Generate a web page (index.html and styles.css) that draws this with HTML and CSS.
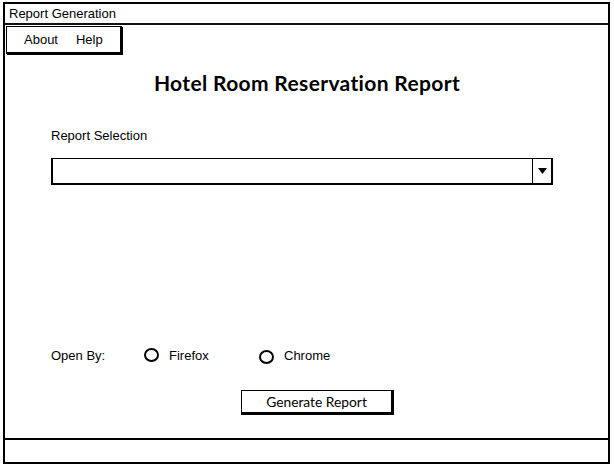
FILE: index.html
```html
<!DOCTYPE html>
<html>
<head>
<meta charset="utf-8">
<link rel="stylesheet" href="styles.css">
</head>
<body>
<div class="window">
  <div class="titlebar">Report Generation</div>
  <div class="menubar">
    <div class="menu"><span>About</span><span>Help</span></div>
  </div>
  <div class="content">
    <h1 class="heading">Hotel Room Reservation Report</h1>
    <div class="label">Report Selection</div>
    <div class="combo">
      <div class="combo-field"></div>
      <div class="combo-btn"><svg width="9" height="6" viewBox="0 0 9 6"><path d="M0 0H9L4.5 6Z" fill="#000"/></svg></div>
    </div>
    <div class="spacer"></div>
    <div class="openby">
      <span class="ob-label">Open By:</span>
      <span class="radio"><span class="circle"></span>Firefox</span>
      <span class="radio"><span class="circle low"></span>Chrome</span>
    </div>
    <div class="btnrow"><div class="button">Generate Report</div></div>
  </div>
  <div class="statusbar"></div>
</div>
</body>
</html>
```
FILE: styles.css
```css
html, body { margin: 0; padding: 0; background: #fff; }
body { width: 614px; height: 472px; font-family: "Liberation Sans", Arial, sans-serif; color: #000; }
.window {
  margin: 2px 0 0 3px;
  width: 603px;
  height: 458px;
  border: 2px solid #000;
  display: flex;
  flex-direction: column;
}
.titlebar {
  height: 19px;
  border-bottom: 2px solid #111;
  font-size: 13px;
  line-height: 19px;
  padding-left: 4px;
}
.menubar { padding: 1px 0 0 1px; }
.menu {
  width: 116px;
  height: 28px;
  border: 2px solid #000;
  border-top-width: 1px;
  border-left-width: 1px;
  box-shadow: 1px 1px 0 #000;
  display: flex;
  align-items: center;
  gap: 18px;
  padding-left: 17px;
  font-size: 13px;
  box-sizing: border-box;
}
.content { flex: 1; display: flex; flex-direction: column; padding: 0 0 0 46px; }
.heading {
  margin: 16px 0 0 0;
  font-family: "Lato", sans-serif;
  font-weight: bold;
  font-size: 21px;
  text-align: center;
  width: 512px;
  letter-spacing: 0.35px;
  line-height: 26px;
}
.label { margin-top: 32px; font-size: 13px; line-height: 16px; }
.combo {
  margin-top: 14px;
  width: 502px;
  height: 27px;
  display: flex;
  border: 2px solid #000;
  border-top-width: 1px;
  box-sizing: border-box;
}
.combo-field { flex: 1; }
.combo-btn {
  width: 18px;
  border-left: 1px solid #000;
  display: flex;
  align-items: center;
  justify-content: center;
}
.spacer { height: 161px; }
.openby { display: flex; align-items: center; font-size: 13px; height: 18px; }
.ob-label { width: 93px; }
.radio { display: flex; align-items: center; width: 115px; }
.circle {
  width: 11px; height: 10px;
  border: 2px solid #000;
  border-radius: 50%;
  margin-right: 10px;
}
.circle.low { margin-top: 3px; }
.btnrow { margin-top: 26px; padding-left: 190px; }
.button {
  width: 149px;
  height: 21px;
  border: 1px solid #000;
  border-right-width: 3px;
  border-bottom-width: 3px;
  font-family: "Lato", sans-serif;
  font-size: 13.8px;
  text-align: center;
  line-height: 22px;
}
.statusbar { height: 22px; border-top: 2px solid #000; }
```
